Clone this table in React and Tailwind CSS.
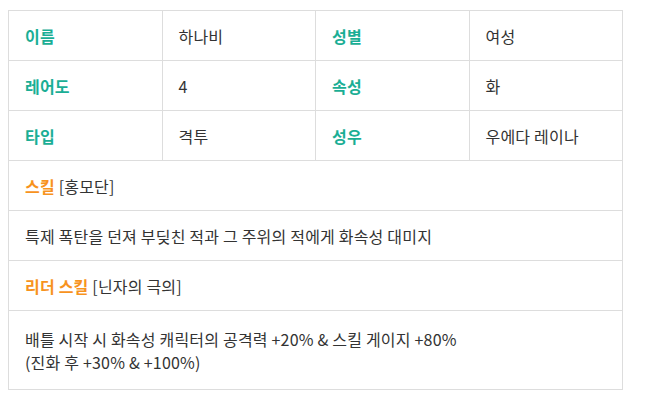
import React from 'react';

const rows = [
  ['이름', '하나비', '성별', '여성'],
  ['레어도', '4', '속성', '화'],
  ['타입', '격투', '성우', '우에다 레이나'],
];

const App = () => {
  return (
    <div className="w-[655px] h-[407px] bg-white pl-[8px] pt-[10px] font-['Noto_Sans_CJK_KR','Noto_Sans',sans-serif] text-[16px] tracking-[0.2px] text-[#333]">
      <table className="w-[615px] border-collapse table-fixed">
        <tbody>
          {rows.map((r, i) => (
            <tr key={i} className="h-[50px]">
              <td className="border border-[#ddd] px-4 font-bold text-[#1aae95]">{r[0]}</td>
              <td className="border border-[#ddd] px-4">{r[1]}</td>
              <td className="border border-[#ddd] px-4 font-bold text-[#1aae95]">{r[2]}</td>
              <td className="border border-[#ddd] px-4">{r[3]}</td>
            </tr>
          ))}
          <tr className="h-[50px]">
            <td colSpan={4} className="border border-[#ddd] px-4">
              <span className="font-bold text-[#f7931e]">스킬</span> [홍모단]
            </td>
          </tr>
          <tr className="h-[50px]">
            <td colSpan={4} className="border border-[#ddd] px-4">
              특제 폭탄을 던져 부딪친 적과 그 주위의 적에게 화속성 대미지
            </td>
          </tr>
          <tr className="h-[50px]">
            <td colSpan={4} className="border border-[#ddd] px-4">
              <span className="font-bold text-[#f7931e]">리더 스킬</span> [닌자의 극의]
            </td>
          </tr>
          <tr>
            <td colSpan={4} className="border border-[#ddd] px-4 pt-[17px] pb-[15px] leading-[23px]">
              배틀 시작 시 화속성 캐릭터의 공격력 +20% &amp; 스킬 게이지 +80%
              <br />
              (진화 후 +30% &amp; +100%)
            </td>
          </tr>
        </tbody>
      </table>
    </div>
  );
};

export default App;
